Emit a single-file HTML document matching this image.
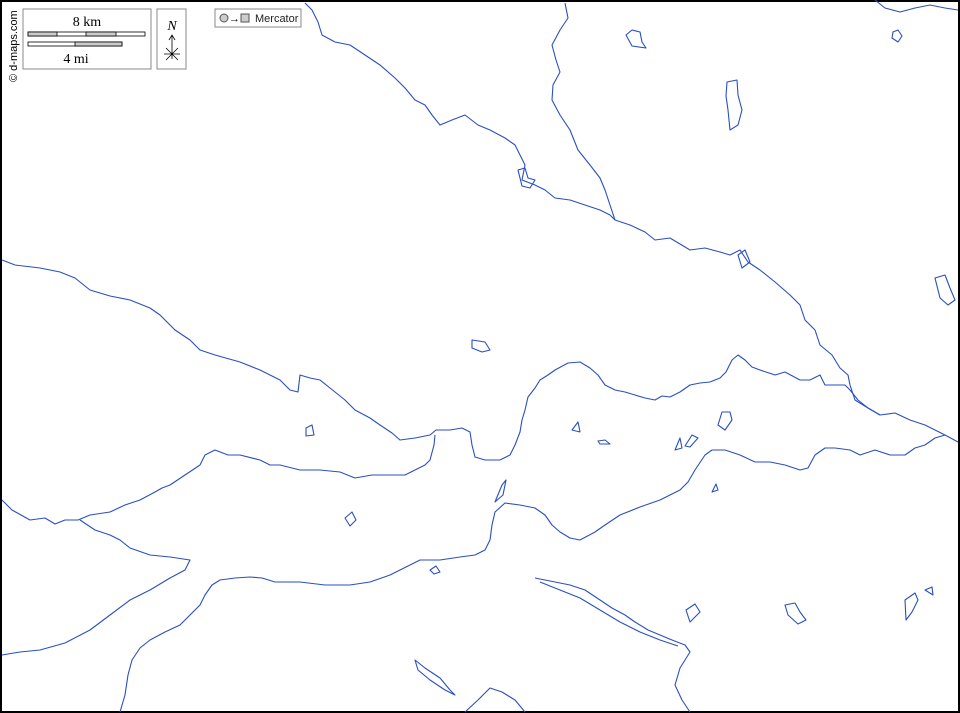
<!DOCTYPE html>
<html><head><meta charset="utf-8"><style>
html,body{margin:0;padding:0;background:#fff}
.wrap{position:relative;width:960px;height:713px;overflow:hidden;background:#fff}
svg{position:absolute;left:0;top:0}
</style></head><body><div class="wrap">
<svg width="960" height="713" viewBox="0 0 960 713">
<rect x="1" y="1" width="958" height="711" fill="#fff" stroke="#000" stroke-width="2"/>
<g fill="none" stroke="#2a4fc0" stroke-width="1.1" stroke-linejoin="round">
<path d="M305,3 L312,10 318,22 322,35 335,42 350,45 365,55 380,65 395,78 405,88 415,100 425,105 432,115 440,125 452,120 465,115 478,125 490,130 505,138 515,145 520,155 525,165 522,180 535,185 545,190 555,198 570,200 585,205 600,210 610,215 615,220 630,225 645,232 655,240 670,238 690,250 705,248 720,252 730,255 740,250 748,262 760,270 775,282 790,295 800,305 805,320 815,330 820,345 832,355 840,368 848,375 850,385 855,400 868,408 880,415 895,413 910,420 925,425 945,435 958,442"/>
<path d="M565,3 L568,18 560,30 552,45 556,60 560,72 553,85 552,100 560,115 570,130 578,150 590,165 600,178 605,190 610,205 615,220"/>
<path d="M2,260 L15,265 40,268 60,272 75,278 90,290 110,296 130,300 150,308 160,315 175,330 190,340 200,350 215,355 240,362 260,370 280,380 290,390 298,392 300,375 310,378 320,380 330,388 345,400 355,410 370,418 380,425 392,433 400,440 415,438 430,435 436,430 450,430 462,428 470,432 472,445 475,457 485,460 500,460 510,455 515,445 520,432 522,420 525,410 528,397 535,388 540,380 548,375 555,370 568,363 580,362 590,368 598,375 605,385 615,390 625,392 635,395 645,398 655,400 662,396 670,397 680,392 690,385 700,383 710,382 720,378 726,372 732,360 738,355 745,360 752,367 760,370 775,375 785,372 800,380 810,380 820,375 825,385 835,385 845,385 850,390 858,400 868,408 880,415"/>
<path d="M2,500 L12,510 30,520 45,518 55,524 65,520 78,520 90,515 110,512 125,505 140,500 155,492 162,488 170,485 185,475 200,465 205,455 215,450 228,455 240,455 260,460 270,465 280,465 300,470 320,470 340,472 355,478 372,475 390,475 405,475 415,470 425,465 430,460 434,445 435,435"/>
<path d="M80,520 L95,530 110,535 120,540 130,548 150,555 170,557 190,560 185,570 170,578 150,590 130,600 110,615 90,630 65,643 40,650 20,652 2,655"/>
<path d="M120,712 L125,695 128,675 132,660 140,648 150,640 165,632 180,625 190,615 200,605 205,595 212,585 220,580 235,578 250,577 262,578 275,582 300,582 325,585 350,585 370,582 390,575 400,570 410,565 420,560 440,560 460,557 475,555 485,550 490,540 492,525 495,512 505,503 520,505 535,508 545,515 552,525 560,532 570,538 580,540 595,532 605,525 620,515 640,507 660,500 670,495 680,490 688,482 695,470 705,455 712,450 725,450 740,455 755,462 770,462 785,465 800,470 808,468 815,455 825,448 835,448 850,450 860,455 875,450 890,455 905,455 915,448 925,445 935,438 945,435"/>
<path d="M535,578 L545,580 555,582 570,585 585,590 600,600 612,608 625,615 635,622 648,630 660,635 672,640 685,645 690,652 685,660 680,668 675,685 682,700 690,712"/>
<path d="M540,582 L560,590 580,598 600,610 620,622 640,632 660,640 678,646"/>
<path d="M465,712 L478,700 490,688 502,692 515,700 525,712"/>
<path d="M415,660 L425,668 440,678 450,690 455,695 445,690 430,680 418,670 Z"/>
<path d="M472,340 L485,342 490,350 482,352 472,348 Z"/>
<path d="M306,428 L312,425 314,435 306,436 Z"/>
<path d="M345,518 L352,512 356,520 350,526 Z"/>
<path d="M495,502 L502,485 506,480 503,495 Z"/>
<path d="M572,430 L578,422 580,432 Z"/>
<path d="M598,441 L605,440 610,444 600,444 Z"/>
<path d="M675,450 L680,438 682,448 Z M685,446 L692,435 698,438 690,447 Z"/>
<path d="M718,425 L722,412 730,412 732,420 725,430 Z"/>
<path d="M712,492 L716,484 718,490 Z"/>
<path d="M430,570 L436,566 440,572 434,574 Z"/>
<path d="M626,35 L632,30 640,32 642,42 646,48 632,46 Z"/>
<path d="M893,32 L898,30 902,36 898,42 892,38 Z"/>
<path d="M727,82 L737,80 738,95 742,110 738,125 730,130 728,110 726,96 Z"/>
<path d="M518,170 L525,168 528,178 535,180 530,188 522,186 Z"/>
<path d="M935,278 L945,275 950,288 955,300 948,305 940,298 Z"/>
<path d="M686,610 L695,604 700,612 690,622 Z"/>
<path d="M785,605 L795,603 800,612 806,620 798,624 788,615 Z"/>
<path d="M905,600 L915,593 918,600 912,612 906,620 Z M925,590 L932,587 933,595 Z"/>
<path d="M738,255 L745,250 750,262 742,268 Z"/>
<path d="M875,0 L885,8 900,12 915,8 930,5 945,8 958,10"/>
</g>
<g font-family="Liberation Serif, serif" fill="#000">
<rect x="23" y="9" width="128" height="60" fill="#fff" stroke="#888"/>
<text x="87" y="26" font-size="14" text-anchor="middle">8 km</text>
<rect x="28" y="32" width="117" height="4" fill="#fff" stroke="#000" stroke-width=".8"/>
<rect x="28" y="32" width="29" height="4" fill="#ccc" stroke="#000" stroke-width=".8"/>
<rect x="86" y="32" width="30" height="4" fill="#ccc" stroke="#000" stroke-width=".8"/>
<rect x="28" y="42" width="94" height="4" fill="#fff" stroke="#000" stroke-width=".8"/>
<rect x="75" y="42" width="47" height="4" fill="#ccc" stroke="#000" stroke-width=".8"/>
<text x="76" y="63" font-size="14" text-anchor="middle">4 mi</text>
<rect x="157" y="9" width="29" height="60" fill="#fff" stroke="#888"/>
<text x="172" y="30" font-size="14" font-style="italic" text-anchor="middle">N</text>
<path d="M172,59 V36 M169,40 L172,35 175,40 M164,54 H180 M166,48 L178,60 M178,48 L166,60" stroke="#000" stroke-width=".8" fill="none"/>
<rect x="215" y="9" width="86" height="18" fill="#fff" stroke="#888"/>
<circle cx="224" cy="18" r="4" fill="#ccc" stroke="#555"/>
<text x="229" y="22" font-size="11" font-family="Liberation Sans, sans-serif">→</text>
<rect x="241" y="14" width="8" height="8" fill="#ccc" stroke="#555"/>
<text x="255" y="22" font-size="11" font-family="Liberation Sans, sans-serif" fill="#222">Mercator</text>
<text transform="translate(17,82) rotate(-90)" font-size="11" font-family="Liberation Sans, sans-serif">© d-maps.com</text>
</g>
</svg>
</div></body></html>
